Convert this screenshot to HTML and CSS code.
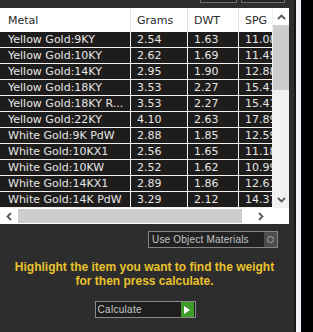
FILE: index.html
```html
<!DOCTYPE html>
<html lang="en">
<head>
    <meta charset="UTF-8">
    <meta name="viewport" content="width=device-width, initial-scale=1.0">
    <title>Metal Weight</title>
    <link rel="stylesheet" href="styles.css">
</head>
<body>
    <div class="window">
        <div class="panel">
            <div class="toolbar">
                <span class="tool-btn"></span>
                <span class="tool-btn wide"></span>
            </div>

            <!-- Metal list -->
            <div class="grid-box">
                <div class="grid-view">
                    <table class="grid">
                        <colgroup>
                            <col class="col-metal">
                            <col class="col-grams">
                            <col class="col-dwt">
                            <col class="col-spg">
                        </colgroup>
                        <thead>
                            <tr><th>Metal</th><th>Grams</th><th>DWT</th><th>SPG</th></tr>
                        </thead>
                        <tbody id="metalRows"></tbody>
                    </table>
                </div>
                <div class="vscroll">
                    <span class="arrow arrow-up">
                        <svg width="9" height="6" viewBox="0 0 9 6"><path d="M1 5 L4.5 1.5 L8 5" fill="none" stroke="#5a5a5a" stroke-width="1.8"/></svg>
                    </span>
                    <div class="vthumb"></div>
                    <span class="arrow arrow-down">
                        <svg width="9" height="6" viewBox="0 0 9 6"><path d="M1 1 L4.5 4.5 L8 1" fill="none" stroke="#5a5a5a" stroke-width="1.8"/></svg>
                    </span>
                </div>
                <div class="hscroll">
                    <span class="arrow arrow-left">
                        <svg width="6" height="9" viewBox="0 0 6 9"><path d="M5 1 L1.5 4.5 L5 8" fill="none" stroke="#5a5a5a" stroke-width="1.8"/></svg>
                    </span>
                    <div class="hthumb"></div>
                    <span class="arrow arrow-right">
                        <svg width="6" height="9" viewBox="0 0 6 9"><path d="M1 1 L4.5 4.5 L1 8" fill="none" stroke="#5a5a5a" stroke-width="1.8"/></svg>
                    </span>
                </div>
                <div class="corner"></div>
            </div>

            <div class="option-row">
                <div class="toggle">
                    <span class="toggle-label">Use Object Materials</span>
                    <span class="toggle-knob"><span class="ring"></span></span>
                </div>
            </div>

            <p class="hint">Highlight the item you want to find the weight<br>for then press calculate.</p>

            <div class="action-row">
                <div class="calc-btn">
                    <span class="calc-label">Calculate</span>
                    <span class="go">
                        <svg width="6" height="8" viewBox="0 0 6 8"><path d="M0 0 L6 4 L0 8 Z" fill="#fff"/></svg>
                    </span>
                </div>
            </div>
        </div>
        <div class="gutter"></div>
        <div class="edge-dark"></div>
        <div class="edge-light"></div>
        <div class="edge-black"></div>
    </div>

    <script>
        const metalRows = document.getElementById('metalRows');

        const metals = [
            { name: 'Yellow Gold:9KY', grams: '2.54', dwt: '1.63', spg: '11.08' },
            { name: 'Yellow Gold:10KY', grams: '2.62', dwt: '1.69', spg: '11.45' },
            { name: 'Yellow Gold:14KY', grams: '2.95', dwt: '1.90', spg: '12.88' },
            { name: 'Yellow Gold:18KY', grams: '3.53', dwt: '2.27', spg: '15.41' },
            { name: 'Yellow Gold:18KY R...', grams: '3.53', dwt: '2.27', spg: '15.41' },
            { name: 'Yellow Gold:22KY', grams: '4.10', dwt: '2.63', spg: '17.89' },
            { name: 'White Gold:9K PdW', grams: '2.88', dwt: '1.85', spg: '12.59' },
            { name: 'White Gold:10KX1', grams: '2.56', dwt: '1.65', spg: '11.18' },
            { name: 'White Gold:10KW', grams: '2.52', dwt: '1.62', spg: '10.99' },
            { name: 'White Gold:14KX1', grams: '2.89', dwt: '1.86', spg: '12.61' },
            { name: 'White Gold:14K PdW', grams: '3.29', dwt: '2.12', spg: '14.37' }
        ];

        metals.forEach(metal => {
            const row = document.createElement('tr');
            row.innerHTML = `
                <td>${metal.name}</td>
                <td>${metal.grams}</td>
                <td>${metal.dwt}</td>
                <td>${metal.spg}</td>
            `;
            metalRows.appendChild(row);
        });
    </script>
</body>
</html>
```

FILE: styles.css
```css
body {
    margin: 0;
    padding: 0;
    background-color: #000;
    font-family: 'DejaVu Sans', Verdana, sans-serif;
}

.window {
    display: flex;
    width: 313px;
    height: 332px;
    overflow: hidden;
}

.panel {
    width: 289px;
    background-color: #2d2d2d;
    display: flex;
    flex-direction: column;
}

.gutter {
    width: 5px;
    background-color: #2d2d2d;
}

.edge-dark {
    width: 2px;
    background-color: #171717;
}

.edge-light {
    width: 5px;
    background-color: #eef2f6;
}

.edge-black {
    flex: 1;
    background-color: #000;
}

/* top buttons, only their lower edge shows */
.toolbar {
    height: 8px;
    display: flex;
    justify-content: flex-end;
    align-items: flex-start;
    gap: 4px;
    padding-right: 4px;
}

.tool-btn {
    width: 35px;
    height: 2px;
    border: 1px solid #6e6e6e;
    border-top: none;
    background-color: #262626;
}

.tool-btn.wide {
    width: 42px;
}

/* grid */
.grid-box {
    display: grid;
    grid-template-columns: 272px 17px;
    grid-template-rows: 200px 16px;
    background-color: #fff;
}

.grid-view {
    overflow: hidden;
}

.grid {
    table-layout: fixed;
    width: 300px;
    border-collapse: separate;
    border-spacing: 0;
    font-size: 11px;
}

.col-metal { width: 131px; }
.col-grams { width: 57px; }
.col-dwt { width: 51px; }
.col-spg { width: 61px; }

.grid th {
    height: 24px;
    padding: 0 0 0 6px;
    text-align: left;
    font-weight: normal;
    color: #2a2a2a;
    border-right: 1px solid #e4e4e4;
    background-color: #fff;
    white-space: nowrap;
}

.grid td {
    height: 15px;
    line-height: 15px;
    padding: 0 0 0 6px;
    color: #e6e6e6;
    background-color: #1f1d1c;
    border-bottom: 1px solid #f2f2f2;
    border-right: 1px solid #f2f2f2;
    white-space: nowrap;
    overflow: hidden;
}

.grid th:first-child,
.grid td:first-child {
    padding-left: 8px;
}

.vscroll {
    background-color: #f1f1f1;
    display: flex;
    flex-direction: column;
    padding-left: 1px;
}

.vscroll .arrow {
    height: 17px;
    display: flex;
    align-items: center;
    justify-content: center;
}

.arrow-up {
    background-color: #fff;
}

.vthumb {
    height: 65px;
    background-color: #cdcdcd;
}

.arrow-down {
    margin-top: auto;
}

.hscroll {
    display: flex;
    align-items: center;
    background-color: #fff;
}

.hscroll .arrow {
    width: 18px;
    height: 16px;
    display: flex;
    align-items: center;
    justify-content: center;
}

.hthumb {
    width: 224px;
    height: 14px;
    background-color: #cdcdcd;
}

.arrow-right {
    margin-left: auto;
    margin-right: 2px;
}

.corner {
    background-color: #fff;
}

/* options */
.option-row {
    display: flex;
    justify-content: flex-end;
    margin-top: 7px;
    padding-right: 11px;
}

.toggle {
    width: 128px;
    height: 15px;
    border: 1px solid #858585;
    background-color: #222;
    display: flex;
    align-items: center;
    font-family: 'Liberation Sans', Arial, sans-serif;
    font-size: 10px;
    letter-spacing: 0.2px;
    color: #c4c4c4;
}

.toggle-label {
    padding-left: 3px;
    flex: 1;
}

.toggle-knob {
    width: 13px;
    height: 15px;
    background-color: #4d4d4d;
    display: flex;
    align-items: center;
    justify-content: center;
}

.ring {
    width: 5px;
    height: 5px;
    border: 1px solid #a8a8a8;
    border-radius: 50%;
}

.hint {
    margin: 12px 0 0;
    text-align: center;
    font-family: 'Liberation Sans', Arial, sans-serif;
    font-weight: bold;
    font-size: 12px;
    line-height: 14px;
    color: #e9c22c;
}

.action-row {
    display: flex;
    justify-content: center;
    margin-top: 13px;
    padding-left: 1px;
}

.calc-btn {
    width: 98px;
    height: 15px;
    border: 1px solid #8a8a8a;
    background-color: #1e1e1e;
    display: flex;
    align-items: center;
    padding-right: 1px;
    font-family: 'Liberation Sans', Arial, sans-serif;
    font-size: 10px;
    letter-spacing: 0.3px;
    color: #c8c8c8;
}

.calc-label {
    flex: 1;
    padding-left: 2px;
}

.go {
    width: 13px;
    height: 15px;
    background-color: #3f9c2c;
    display: flex;
    align-items: center;
    justify-content: center;
}
```
